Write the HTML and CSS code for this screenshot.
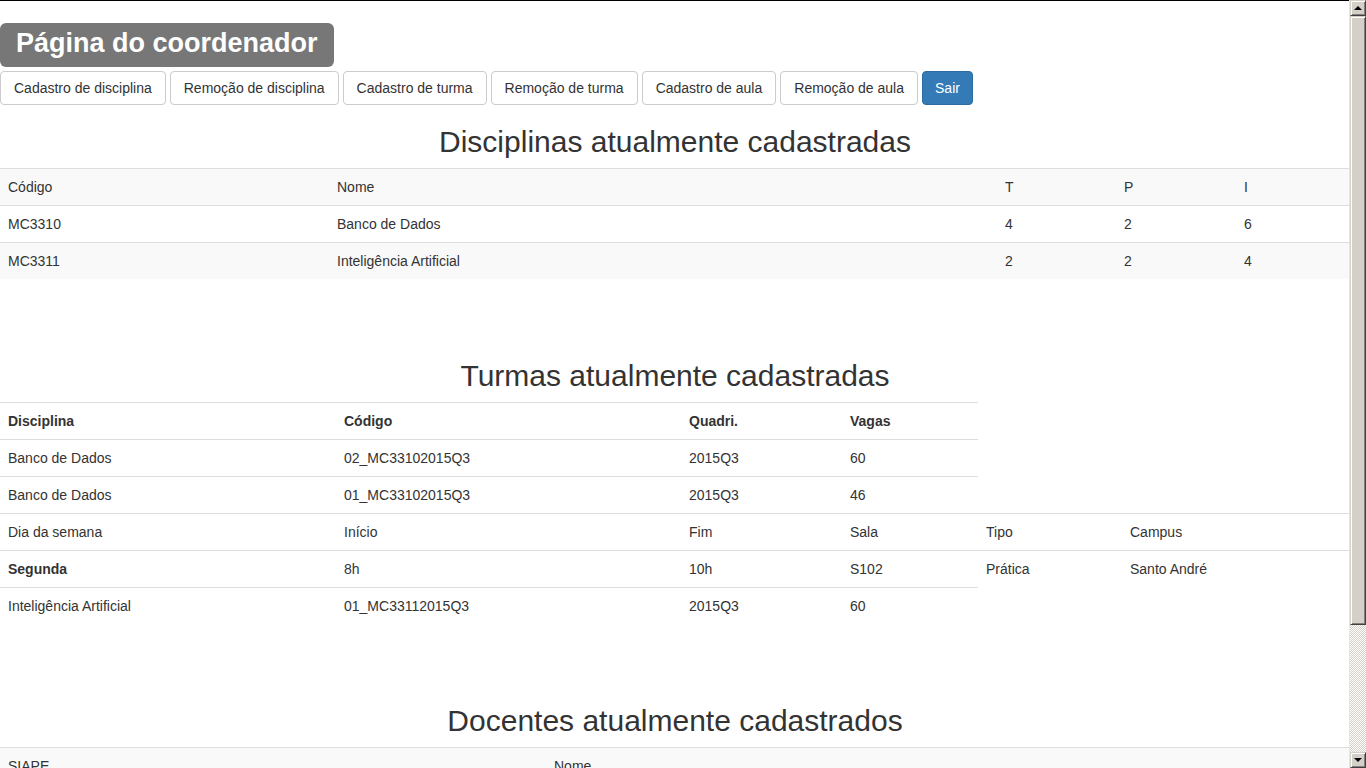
FILE: index.html
```html
<!DOCTYPE html>
<html lang="pt-BR">
<head>
<meta charset="utf-8">
<title>Página do coordenador</title>
<link rel="stylesheet" href="styles.css">
</head>
<body>
<div class="page">
  <div class="page-title"><span class="label">Página do coordenador</span></div>
  <div class="actions">
    <button class="btn">Cadastro de disciplina</button>
    <button class="btn">Remoção de disciplina</button>
    <button class="btn">Cadastro de turma</button>
    <button class="btn">Remoção de turma</button>
    <button class="btn">Cadastro de aula</button>
    <button class="btn">Remoção de aula</button>
    <button class="btn btn-primary">Sair</button>
  </div>

  <h2 class="section-title">Disciplinas atualmente cadastradas</h2>
  <table class="table striped">
    <colgroup><col class="w329"><col class="w668"><col class="w119"><col class="w120"><col></colgroup>
    <tbody>
      <tr><td>Código</td><td>Nome</td><td>T</td><td>P</td><td>I</td></tr>
      <tr><td>MC3310</td><td>Banco de Dados</td><td>4</td><td>2</td><td>6</td></tr>
      <tr><td>MC3311</td><td>Inteligência Artificial</td><td>2</td><td>2</td><td>4</td></tr>
    </tbody>
  </table>

  <h2 class="section-title">Turmas atualmente cadastradas</h2>
  <table class="table">
    <colgroup><col class="w336"><col class="w345"><col class="w161"><col class="w136"><col class="w144"><col></colgroup>
    <tbody>
      <tr><th>Disciplina</th><th>Código</th><th>Quadri.</th><th>Vagas</th></tr>
      <tr><td>Banco de Dados</td><td>02_MC33102015Q3</td><td>2015Q3</td><td>60</td></tr>
      <tr><td>Banco de Dados</td><td>01_MC33102015Q3</td><td>2015Q3</td><td>46</td></tr>
      <tr><td>Dia da semana</td><td>Início</td><td>Fim</td><td>Sala</td><td>Tipo</td><td>Campus</td></tr>
      <tr><th>Segunda</th><td>8h</td><td>10h</td><td>S102</td><td>Prática</td><td>Santo André</td></tr>
      <tr><td>Inteligência Artificial</td><td>01_MC33112015Q3</td><td>2015Q3</td><td>60</td></tr>
    </tbody>
  </table>

  <h2 class="section-title">Docentes atualmente cadastrados</h2>
  <table class="table striped">
    <colgroup><col class="w546"><col></colgroup>
    <tbody>
      <tr><td>SIAPE</td><td>Nome</td></tr>
    </tbody>
  </table>
</div>

<div class="scrollbar" aria-hidden="true">
  <div class="sb-btn"><span class="arrow-up"></span></div>
  <div class="sb-thumb"></div>
  <div class="sb-track"></div>
  <div class="sb-btn"><span class="arrow-down"></span></div>
</div>
</body>
</html>
```

FILE: styles.css
```css
html, body {
  margin: 0;
  padding: 0;
  height: 768px;
  overflow: hidden;
  background: #fff;
}

body {
  font-family: "Liberation Sans", Arial, sans-serif;
  font-size: 14px;
  line-height: 20px;
  color: #333;
  border-top: 1px solid #000;
}

.page {
  width: 1350px;
}

.page-title {
  margin-top: 22px;
  height: 44px;
}

.label {
  display: inline-block;
  height: 44px;
  box-sizing: border-box;
  padding: 0 16px 3px 16px;
  line-height: 41px;
  background: #777;
  color: #fff;
  font-weight: bold;
  font-size: 27px;
  border-radius: 6px;
  white-space: nowrap;
}

.actions {
  display: flex;
  gap: 4px;
  margin-top: 4px;
}

.btn {
  font-family: "Liberation Sans", Arial, sans-serif;
  font-size: 14px;
  line-height: 20px;
  padding: 6px 13px;
  height: 34px;
  box-sizing: border-box;
  border: 1px solid #ccc;
  border-radius: 4px;
  background: #fff;
  color: #333;
  margin: 0;
  white-space: nowrap;
}

.btn-primary {
  padding: 6px 12px;
  background: #337ab7;
  border-color: #2e6da4;
  color: #fff;
}

.section-title {
  font-family: "Liberation Sans", Arial, sans-serif;
  font-size: 30px;
  font-weight: normal;
  line-height: 33px;
  margin: 20px 0 10px;
  text-align: center;
  color: #333;
}

.table {
  width: 1350px;
  border-collapse: collapse;
  border-spacing: 0;
  table-layout: fixed;
  margin-bottom: 80px;
}

.table td,
.table th {
  padding: 8px;
  line-height: 20px;
  border-top: 1px solid #ddd;
  text-align: left;
  vertical-align: top;
  white-space: nowrap;
}

.table th {
  font-weight: bold;
}

.striped tbody tr:nth-of-type(odd) {
  background: #f9f9f9;
}

.w329 { width: 329px; }
.w668 { width: 668px; }
.w119 { width: 119px; }
.w120 { width: 120px; }
.w336 { width: 336px; }
.w345 { width: 345px; }
.w161 { width: 161px; }
.w136 { width: 136px; }
.w144 { width: 144px; }
.w546 { width: 546px; }

/* classic scrollbar drawn over the right edge */
.scrollbar {
  position: fixed;
  top: 0;
  right: 0;
  width: 16px;
  height: 768px;
  display: flex;
  flex-direction: column;
  background: repeating-conic-gradient(#d4d0c8 0 25%, #fff 0 50%) 0 0 / 2px 2px;
  border-left: 1px solid #e8e6e0;
}

.sb-btn,
.sb-thumb {
  box-sizing: border-box;
  background: #d4d0c8;
  border: 1px solid;
  border-color: #d4d0c8 #404040 #404040 #d4d0c8;
  box-shadow: inset 1px 1px #fff, inset -1px -1px #808080;
}

.sb-btn {
  height: 16px;
  display: flex;
  align-items: center;
  justify-content: center;
}

.sb-thumb {
  height: 609px;
}

.sb-track {
  flex: 1;
}

.arrow-up,
.arrow-down {
  width: 0;
  height: 0;
  border-left: 4px solid transparent;
  border-right: 4px solid transparent;
}

.arrow-up {
  border-bottom: 4px solid #000;
}

.arrow-down {
  border-top: 4px solid #000;
}
```
